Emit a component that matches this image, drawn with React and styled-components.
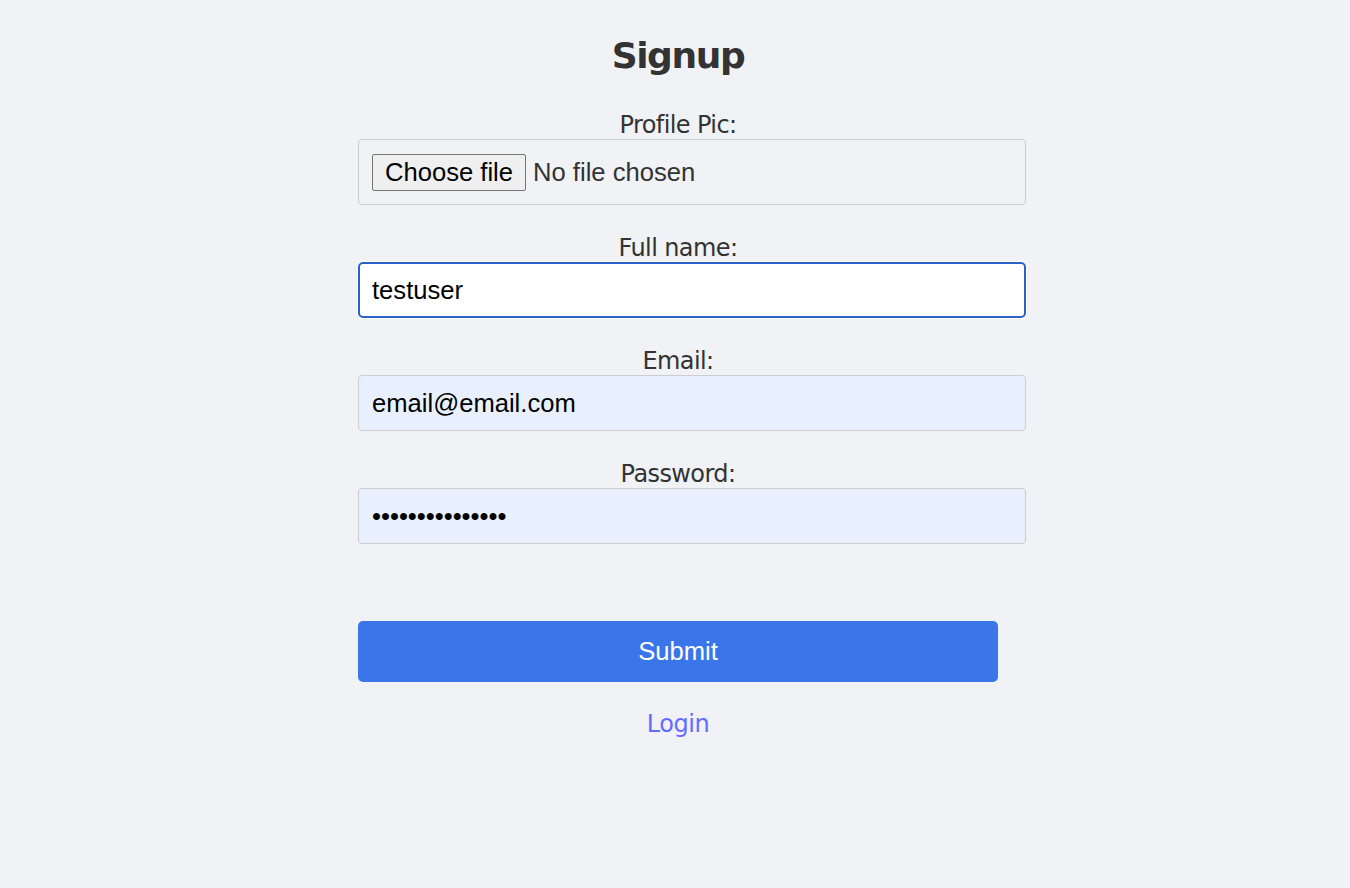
import React, { useState } from 'react';
import styled, { createGlobalStyle } from 'styled-components';

const GlobalStyle = createGlobalStyle`
    html, body {
        margin: 0;
        padding: 0;
        background: #f0f2f5;
    }
    body {
        font-family: "DejaVu Sans", Verdana, sans-serif;
        color: #333;
    }
`

const Page = styled.div`
    min-height: 100vh;
    box-sizing: border-box;
    display: flex;
    justify-content: center;
    padding: 33px 0 0 6px;
`

const Container = styled.div`
    width: 640px;
    display: flex;
    flex-direction: column;
`

const Title = styled.h2`
    margin: 0;
    text-align: center;
    font-family: "DejaVu Sans", Verdana, sans-serif;
    font-size: 36px;
    font-weight: bold;
    line-height: 46px;
    letter-spacing: -1.4px;
    color: #333;
`

const Form = styled.form`
    margin-top: 32px;
    display: flex;
    flex-direction: column;
`

const Field = styled.div`
    display: flex;
    flex-direction: column;
    & + & {
        margin-top: 29px;
    }
`

const Label = styled.label`
    display: block;
    text-align: center;
    font-size: 24px;
    line-height: 28px;
    letter-spacing: -0.6px;
    color: #333;
`

const TextInput = styled.input`
    width: calc(100% + 28px);
    height: 56px;
    box-sizing: border-box;
    padding: 0 13px;
    border: ${p => p.$focused ? '2px solid #2c62c7' : '1px solid #cdcdcd'};
    padding-left: ${p => p.$focused ? '12px' : '13px'};
    border-radius: ${p => p.$focused ? '5px' : '4px'};
    box-shadow: ${p => p.$focused ? '0 0 0 1px #fff' : 'none'};
    background: ${p => p.$focused ? '#fff' : p.$filled ? '#e8f0fe' : 'transparent'};
    font-family: "Liberation Sans", Arial, sans-serif;
    font-size: 25.6px;
    color: #000;
    outline: none;
`

const FileBox = styled.label`
    width: calc(100% + 28px);
    height: 66px;
    box-sizing: border-box;
    padding: 0 13px;
    border: 1px solid #cdcdcd;
    border-radius: 4px;
    display: flex;
    align-items: center;
    gap: 7px;
    font-family: "Liberation Sans", Arial, sans-serif;
    font-size: 25.6px;
    color: #333;
    cursor: pointer;
    input {
        display: none;
    }
`

const FileButton = styled.span`
    height: 37px;
    box-sizing: border-box;
    padding: 0 12px;
    display: flex;
    align-items: center;
    background: #efefef;
    border: 1px solid #767676;
    border-radius: 2px;
    color: #000;
`

const SubmitButton = styled.button`
    margin-top: 77px;
    height: 61px;
    width: 100%;
    border: none;
    border-radius: 5px;
    background: #3a76e9;
    color: #fff;
    font-family: "Liberation Sans", Arial, sans-serif;
    font-size: 25.6px;
    cursor: pointer;
`

const LoginLink = styled.a`
    margin-top: 28px;
    align-self: center;
    font-size: 24px;
    line-height: 28px;
    letter-spacing: -0.4px;
    color: #646cff;
    text-decoration: none;
`

const App = () => {
    const [fullName, setFullName] = useState('testuser');
    const [email, setEmail] = useState('email@email.com');
    const [password, setPassword] = useState('secretpassword1');
    const [fileName, setFileName] = useState('');

    return (
        <Page>
            <GlobalStyle />
            <Container>
                <Title>Signup</Title>
                <Form onSubmit={e => e.preventDefault()}>
                    <Field>
                        <Label as='div'>Profile Pic:</Label>
                        <FileBox>
                            <input type='file' onChange={e => setFileName(e.target.files[0]?.name || '')} />
                            <FileButton>Choose file</FileButton>
                            <span>{fileName || 'No file chosen'}</span>
                        </FileBox>
                    </Field>
                    <Field>
                        <Label htmlFor='name'>Full name:</Label>
                        <TextInput id='name' $focused value={fullName} onChange={e => setFullName(e.target.value)} />
                    </Field>
                    <Field>
                        <Label htmlFor='email'>Email:</Label>
                        <TextInput id='email' $filled value={email} onChange={e => setEmail(e.target.value)} />
                    </Field>
                    <Field>
                        <Label htmlFor='password'>Password:</Label>
                        <TextInput id='password' type='password' $filled value={password} onChange={e => setPassword(e.target.value)} />
                    </Field>
                    <SubmitButton type='submit'>Submit</SubmitButton>
                    <LoginLink href='#'>Login</LoginLink>
                </Form>
            </Container>
        </Page>
    )
}

export default App;
